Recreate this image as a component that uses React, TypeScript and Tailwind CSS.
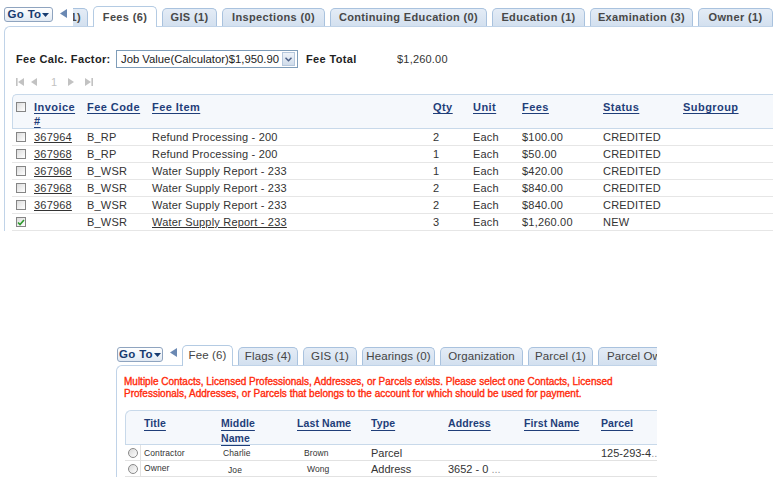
import React from "react";

function LeftArrow() {
  return (
    <svg width="7" height="9" viewBox="0 0 7 9">
      <polygon points="7,0 7,9 0,4.5" fill="#6b89b3" />
    </svg>
  );
}

function GoTo({ className }: { className: string }) {
  return (
    <div
      className={`flex h-[15px] shrink-0 items-center justify-center rounded-[3px] border border-[#8fa4bf] bg-linear-to-b from-white to-[#e1e9f3] text-[11.5px] font-bold leading-none text-[#173b70] ${className}`}
    >
      <span className="tracking-[0.3px]">Go To</span>
      <svg width="7" height="4" viewBox="0 0 7 4" className="ml-[1px]">
        <polygon points="0,0 7,0 3.5,4" fill="#173b70" />
      </svg>
    </div>
  );
}

function TopTab({ label, className, active }: { label: string; className: string; active?: boolean }) {
  if (active) {
    return (
      <div
        className={`relative z-10 -mb-px flex h-[21px] shrink-0 items-center justify-center rounded-t-[5px] border border-b-0 border-[#b4cbe3] bg-white text-[11px] font-bold tracking-[0.35px] text-[#484848] ${className}`}
      >
        {label}
      </div>
    );
  }
  return (
    <div
      className={`flex h-[18px] shrink-0 items-center justify-center rounded-t-[5px] border border-b-0 border-[#a9c2de] bg-linear-to-b from-[#e4ecf6] to-[#d3e0ef] text-[11px] font-bold tracking-[0.35px] text-[#484848] ${className}`}
    >
      {label}
    </div>
  );
}

function BotTab({ label, className, active }: { label: string; className: string; active?: boolean }) {
  if (active) {
    return (
      <div
        className={`relative z-10 -mb-px flex h-[21px] shrink-0 items-center justify-center rounded-t-[5px] border border-b-0 border-[#b4cbe3] bg-white text-[11.5px] tracking-[0.1px] text-[#444] ${className}`}
      >
        {label}
      </div>
    );
  }
  return (
    <div
      className={`flex h-[18px] shrink-0 items-center justify-center overflow-hidden whitespace-nowrap rounded-t-[5px] border border-b-0 border-[#a9c2de] bg-linear-to-b from-[#e4ecf6] to-[#d3e0ef] text-[11.5px] tracking-[0.1px] text-[#444] ${className}`}
    >
      {label}
    </div>
  );
}

function Checkbox({ checked }: { checked?: boolean }) {
  return (
    <div className="flex h-[10px] w-[10px] items-center justify-center border border-[#858585] bg-linear-to-br from-[#dcdcdc] to-white">
      {checked && (
        <svg width="8" height="7" viewBox="0 0 8 7">
          <polyline points="1,3.5 3,5.5 7,1" fill="none" stroke="#2c9a2c" strokeWidth="1.6" />
        </svg>
      )}
    </div>
  );
}

function Radio() {
  return (
    <div className="h-[10px] w-[10px] rounded-full border border-[#8a8a8a] bg-linear-to-br from-[#d8d8d8] to-white" />
  );
}

const feeRows = [
  { inv: "367964", code: "B_RP", item: "Refund Processing - 200", qty: "2", fees: "$100.00", status: "CREDITED" },
  { inv: "367968", code: "B_RP", item: "Refund Processing - 200", qty: "1", fees: "$50.00", status: "CREDITED" },
  { inv: "367968", code: "B_WSR", item: "Water Supply Report - 233", qty: "1", fees: "$420.00", status: "CREDITED" },
  { inv: "367968", code: "B_WSR", item: "Water Supply Report - 233", qty: "2", fees: "$840.00", status: "CREDITED" },
  { inv: "367968", code: "B_WSR", item: "Water Supply Report - 233", qty: "2", fees: "$840.00", status: "CREDITED" },
];

const hdr = "font-bold text-[11px] tracking-[0.45px] text-[#1f3e79] underline decoration-1 underline-offset-[2px]";
const hdr2 = "font-bold text-[10.5px] tracking-[0.1px] text-[#1f3e79] underline decoration-1 underline-offset-[3px]";

export default function App() {
  return (
    <div className="h-[478px] w-[773px] overflow-hidden bg-white font-['Liberation_Sans',Arial,sans-serif] text-[#333]">
      {/* ===== Top screenshot ===== */}
      <div className="flex h-[26px] items-end">
        <GoTo className="mb-[4px] ml-[4px] w-[49px]" />
        <div className="mb-[8px] ml-[7px] flex">
          <LeftArrow />
        </div>
        <div className="ml-[6px] flex items-end gap-[5px]">
          <div className="flex h-[18px] w-[15px] shrink-0 items-center justify-end overflow-hidden whitespace-nowrap rounded-tr-[5px] border-r border-t border-[#a9c2de] bg-linear-to-b from-[#e4ecf6] to-[#d3e0ef] pr-[6px] text-[11px] font-bold tracking-[0.35px] text-[#484848]">
            (1)
          </div>
          <TopTab label="Fees (6)" className="w-[64px]" active />
          <TopTab label="GIS (1)" className="w-[55px]" />
          <TopTab label="Inspections (0)" className="w-[103px]" />
          <TopTab label="Continuing Education (0)" className="w-[157px]" />
          <TopTab label="Education (1)" className="w-[93px]" />
          <TopTab label="Examination (3)" className="w-[103px]" />
          <TopTab label="Owner (1)" className="w-[75px]" />
        </div>
      </div>

      <div className="ml-[4px] rounded-tl-[6px] border-l border-t border-[#c0d3e8] pl-[7px] pt-[23px]">
        {/* fee calc row */}
        <div className="flex h-[18px] items-center pl-[4px]">
          <div className="w-[100px] whitespace-nowrap text-[11px] font-bold tracking-[0.35px] text-[#222]">Fee Calc. Factor:</div>
          <div className="flex h-[18px] w-[182px] items-center justify-between border border-[#7f9db9] pl-[4px] pr-[2px] text-[11.3px] text-[#222]">
            <span className="whitespace-nowrap">Job Value(Calculator)$1,950.90</span>
            <div className="flex h-[14px] w-[13px] items-center justify-center border border-[#b5c7dc] bg-linear-to-b from-[#eef3f9] to-[#d0dcea]">
              <svg width="7" height="5" viewBox="0 0 7 5">
                <polyline points="0.5,0.8 3.5,3.8 6.5,0.8" fill="none" stroke="#4d6189" strokeWidth="1.5" />
              </svg>
            </div>
          </div>
          <div className="ml-[8px] w-[91px] text-[11px] font-bold tracking-[0.35px] text-[#222]">Fee Total</div>
          <div className="text-[11px] tracking-[0.2px] text-[#333]">$1,260.00</div>
        </div>

        {/* pager */}
        <div className="mt-[9px] flex h-[10px] items-center pl-[4px] text-[#c2c2c2]">
          <div className="w-[15px]">
            <svg width="8" height="8" viewBox="0 0 8 8">
              <rect x="0" y="0" width="1.6" height="8" fill="#c2c2c2" />
              <polygon points="8,0 8,8 2,4" fill="#c2c2c2" />
            </svg>
          </div>
          <div className="w-[20px]">
            <svg width="6" height="8" viewBox="0 0 6 8">
              <polygon points="6,0 6,8 0,4" fill="#c2c2c2" />
            </svg>
          </div>
          <div className="w-[17px] text-[11px] leading-none">1</div>
          <div className="w-[17px]">
            <svg width="6" height="8" viewBox="0 0 6 8">
              <polygon points="0,0 0,8 6,4" fill="#c2c2c2" />
            </svg>
          </div>
          <div>
            <svg width="8" height="8" viewBox="0 0 8 8">
              <polygon points="0,0 0,8 6,4" fill="#c2c2c2" />
              <rect x="6.4" y="0" width="1.6" height="8" fill="#c2c2c2" />
            </svg>
          </div>
        </div>

        {/* fee table */}
        <div className="mt-[7px]">
          <div className="grid h-[35px] grid-cols-[21px_53px_65px_281px_40px_49px_81px_80px_1fr] rounded-tl-[5px] border-b border-l border-t border-[#c8d9ea] bg-[#f5f8fc] pt-[5px] leading-[14px]">
            <div className="pl-[3px] pt-[2px]">
              <Checkbox />
            </div>
            <div className={hdr}>
              Invoice
              <br />#
            </div>
            <div className={hdr}>Fee Code</div>
            <div className={hdr}>Fee Item</div>
            <div className={hdr}>Qty</div>
            <div className={hdr}>Unit</div>
            <div className={hdr}>Fees</div>
            <div className={hdr}>Status</div>
            <div className={hdr}>Subgroup</div>
          </div>
          {feeRows.map((r, i) => (
            <div
              key={i}
              className="grid h-[17px] grid-cols-[22px_53px_65px_281px_40px_49px_81px_80px_1fr] items-center border-b border-[#e6e6e6] text-[11px] tracking-[0.2px] text-[#333]"
            >
              <div className="pl-[4px]">
                <Checkbox />
              </div>
              <div className="underline decoration-1 underline-offset-[1px]">{r.inv}</div>
              <div>{r.code}</div>
              <div className="whitespace-nowrap">{r.item}</div>
              <div>{r.qty}</div>
              <div>Each</div>
              <div>{r.fees}</div>
              <div>{r.status}</div>
              <div></div>
            </div>
          ))}
          <div className="grid h-[17px] grid-cols-[22px_53px_65px_281px_40px_49px_81px_80px_1fr] items-center border-b border-[#e6e6e6] text-[11px] tracking-[0.2px] text-[#333]">
            <div className="pl-[4px]">
              <Checkbox checked />
            </div>
            <div></div>
            <div>B_WSR</div>
            <div className="whitespace-nowrap underline decoration-1 underline-offset-[1px]">Water Supply Report - 233</div>
            <div>3</div>
            <div>Each</div>
            <div>$1,260.00</div>
            <div>NEW</div>
            <div></div>
          </div>
        </div>
      </div>

      {/* ===== Bottom screenshot ===== */}
      <div className="ml-[115px] mt-[112px] w-[542px] overflow-hidden">
        <div className="flex h-[22px] items-end">
          <GoTo className="mb-[3px] ml-[2px] w-[46px]" />
          <div className="mb-[8px] ml-[7px] flex">
            <LeftArrow />
          </div>
          <div className="ml-[5px] flex items-end gap-[5px]">
            <BotTab label="Fee (6)" className="w-[51px]" active />
            <BotTab label="Flags (4)" className="w-[60px]" />
            <BotTab label="GIS (1)" className="w-[54px]" />
            <BotTab label="Hearings (0)" className="w-[73px]" />
            <BotTab label="Organization" className="w-[83px]" />
            <BotTab label="Parcel (1)" className="w-[65px]" />
            <BotTab label="Parcel Owner (1)" className="w-[100px] justify-start pl-[8px]" />
          </div>
        </div>

        <div className="ml-[1px] w-[600px] rounded-tl-[6px] border-l border-t border-[#c0d3e8] pt-[10px]">
          <div className="whitespace-nowrap pl-[7px] text-[10px] leading-[12px] tracking-[0px] text-[#ff2a0a] [-webkit-text-stroke:0.35px_#ff2a0a]">
            Multiple Contacts, Licensed Professionals, Addresses, or Parcels exists. Please select one Contacts, Licensed
            <br />
            Professionals, Addresses, or Parcels that belongs to the account for which should be used for payment.
          </div>

          <div className="ml-[8px] mt-[10px]">
            <div className="grid h-[35px] grid-cols-[15px_77px_76px_74px_77px_76px_77px_1fr] rounded-tl-[6px] border-b border-l border-t border-[#c8d9ea] bg-[#f5f8fc] pt-[4px] leading-[14px]">
              <div></div>
              <div className="pl-[3px]">
                <span className={hdr2}>Title</span>
              </div>
              <div className="pl-[3px]">
                <span className={hdr2}>Middle</span>
                <br />
                <span className={hdr2}>Name</span>
              </div>
              <div className="pl-[3px]">
                <span className={hdr2}>Last Name</span>
              </div>
              <div className="pl-[3px]">
                <span className={hdr2}>Type</span>
              </div>
              <div className="pl-[3px]">
                <span className={hdr2}>Address</span>
              </div>
              <div className="pl-[3px]">
                <span className={hdr2}>First Name</span>
              </div>
              <div className="pl-[3px]">
                <span className={hdr2}>Parcel</span>
              </div>
            </div>

            <div className="grid h-[16px] grid-cols-[16px_77px_76px_74px_77px_76px_77px_1fr] items-center border-b border-[#e2e2e2] text-[#333]">
              <div className="flex h-full items-center border-r border-[#e2e2e2] pl-[3px]">
                <Radio />
              </div>
              <div className="pl-[3px] text-[8.5px] tracking-[0.1px]">Contractor</div>
              <div className="pl-[5px] text-[8.5px] tracking-[0.1px]">Charlie</div>
              <div className="pl-[10px] text-[8.5px] tracking-[0.1px]">Brown</div>
              <div className="pl-[3px] text-[11px]">Parcel</div>
              <div></div>
              <div></div>
              <div className="whitespace-nowrap pl-[3px] text-[11px]">
                125-293-4<span className="text-[#999]">...</span>
              </div>
            </div>
            <div className="grid h-[16px] grid-cols-[16px_77px_76px_74px_77px_76px_77px_1fr] items-center border-b border-[#e2e2e2] text-[#333]">
              <div className="flex h-full items-center border-r border-[#e2e2e2] pl-[3px]">
                <Radio />
              </div>
              <div className="pb-[2px] pl-[3px] text-[8.5px] tracking-[0.1px]">Owner</div>
              <div className="pt-[2px] pl-[10px] text-[8.5px] tracking-[0.1px]">Joe</div>
              <div className="pl-[13px] text-[8.5px] tracking-[0.1px]">Wong</div>
              <div className="pl-[3px] text-[11px]">Address</div>
              <div className="whitespace-nowrap pl-[3px] text-[11px]">
                3652 - 0 <span className="text-[#999]">...</span>
              </div>
              <div></div>
              <div></div>
            </div>
          </div>
        </div>
      </div>
    </div>
  );
}
